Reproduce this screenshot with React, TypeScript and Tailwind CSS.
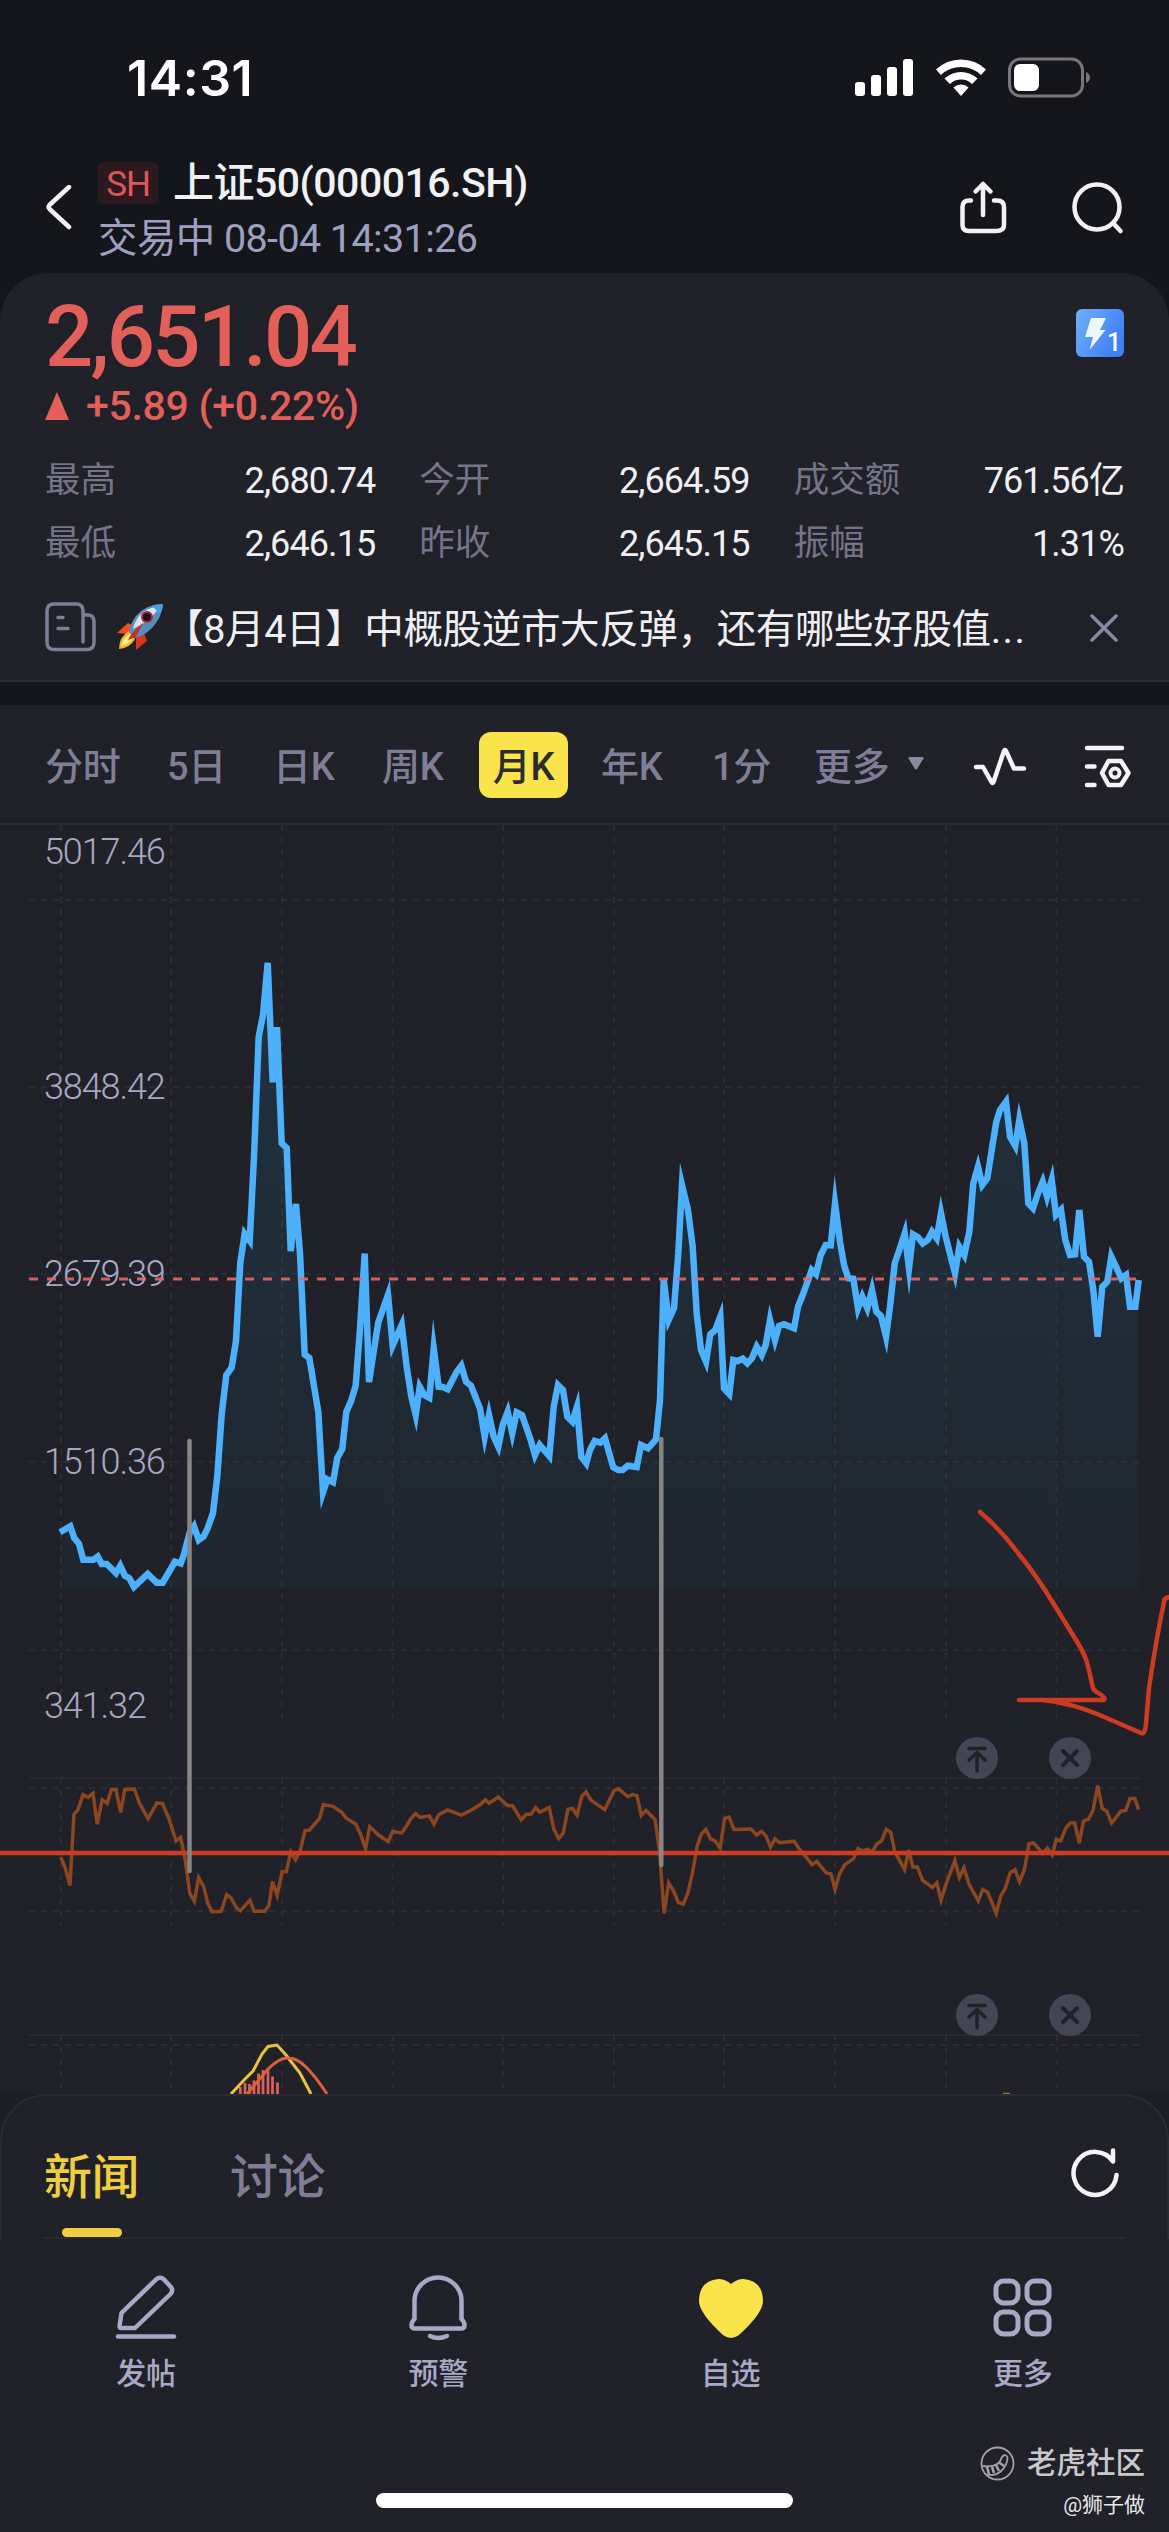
import React from 'react';

type Segment = { x: number; y: number; sx: number; sy: number; pts: string };

// each segment is stored in its own scale, origin at (x, y)
const priceSegments: Segment[] = [
  {
    x: 40, y: 900, sx: 3, sy: 2.178,
    pts: '60,1377 91,1364 103,1390 117,1402 130,1437 160,1437 173,1430 185,1446 200,1446 228,1466 241,1450 255,1472 268,1477 282,1496 323,1468 350,1487 368,1487 405,1441 422,1445 432,1425 449,1378 462,1364 476,1394 491,1386 503,1368 519,1335 532,1255 545,1120 559,1035 575,1018 588,960 601,790 614,727 629,742 642,560 656,298 669,250 683,137 698,397 711,277 725,530 740,540 752,765 768,662 780,770 794,990 808,997 835,1115 849,1290 862,1262 879,1268 892,1215 907,1195 919,1115 934,1090 947,1057 960,935 974,770 987,1050 1003,975 1015,920 1044,860 1058,970',
  },
  {
    x: 400, y: 1100, sx: 3, sy: 3,
    pts: '5,675 20,800 34,890 47,945 59,860 73,885 88,893 101,745 116,860 129,861 143,868 170,815 184,797 198,845 213,857 240,925 254,1010 267,945 281,1010 295,1040 308,975 323,935 337,1000 350,937 366,945 392,1020 405,1065 419,1035 448,1068 461,920 474,855 489,870 502,950 517,965 531,920 544,1070 559,1090 570,1050 584,1023 601,1028 615,1015 640,1102 655,1110 668,1110 683,1097 710,1101 723,1035 744,1045 768,1018 780,900 791,540 806,660 822,625 835,460 846,255 864,330 878,440 890,640 903,750 918,785 931,703 946,690 961,650 972,865 988,882 1000,780 1013,783 1028,776 1042,790 1056,775 1070,740 1085,765 1097,735 1110,660 1125,720 1137,678 1152,673',
  },
  {
    x: 780, y: 1060, sx: 3, sy: 3,
    pts: '42,805 54,740 68,705 95,630 108,642 122,585 137,555 152,556 165,430 180,545 192,615 205,655 220,656 234,745 247,710 262,745 276,690 289,755 303,768 318,830 330,740 344,610 358,570 374,520 387,625 399,523 414,532 428,550 443,540 456,515 470,535 483,460 497,530 511,585 525,640 538,560 553,585 568,515 580,370 594,320 607,375 622,355 635,270 649,185 660,150 678,125 690,230 706,258 718,180 733,250 745,430 759,445 774,400 788,365 801,410 815,360 828,465 843,450 856,540 870,585 885,583 898,450 912,590 927,605 940,690 953,830 967,680 982,665 994,590 1008,620 1024,655 1038,645 1050,740 1066,740 1076,660',
  },
];

const indicatorSegments: Segment[] = [
  {
    x: 0, y: 1500, sx: 2.613, sy: 2.529,
    pts: '159,903 172,935 183,975 193,795 204,783 217,745 230,752 243,742 254,820 267,758 280,767 291,732 303,732 315,790 326,732 351,731 365,768 387,806 410,766 425,768 443,810 460,862 472,853 484,910 496,995 508,1015 519,955 532,977 543,1020 554,1041 578,1040 592,998 604,1007 617,1030 628,1039 653,1012 664,1040 692,1040 703,1025 712,965 724,1000 737,940 748,940 760,890 772,910 785,885 797,836 808,835 835,805 845,770 870,775 893,790 905,805 930,820 942,845 955,882 966,826 990,848 1014,864 1026,838 1050,842 1062,825 1074,805 1086,793 1098,803 1122,799 1134,820 1146,796 1170,784 1206,797 1230,785 1255,770 1268,758 1278,767 1302,751 1325,772 1340,774 1362,809 1375,795 1388,794 1400,778 1410,790 1435,778 1447,832 1460,856 1472,842 1484,782 1496,780 1508,797 1520,750',
  },
  {
    x: 580, y: 1500, sx: 2.662, sy: 2.529,
    pts: '16,738 30,760 66,783 90,736 102,730 127,750 140,745 152,748 163,798 176,785 200,808 212,890 224,1045 236,968 250,990 262,1018 275,1022 287,995 300,940 312,875 323,845 335,833 348,857 360,863 373,880 385,805 397,802 410,833 455,832 470,847 483,838 495,850 507,878 519,857 532,867 570,863 582,880 618,922 630,914 655,943 668,945 679,985 691,945 705,922 728,907 740,881 752,888 765,883 778,890 790,870 803,862 815,833 827,840 838,890 864,935 875,885 886,928 898,928 912,962 938,980 950,968 961,1012 973,975 998,912 1010,955 1022,930 1035,970 1060,1014 1072,985 1085,992 1108,1045 1120,1002 1133,980 1145,943 1158,935 1170,965 1183,935 1195,870 1207,867 1232,893 1244,880 1257,898 1268,858 1280,862 1293,830 1305,817 1317,817 1329,868 1340,812 1354,807 1366,785 1378,722 1390,780 1402,787 1415,817 1440,787 1453,785 1464,755 1477,755 1487,783',
  },
];

const toPoints = (segments: Segment[]) =>
  segments
    .map(s =>
      s.pts
        .split(' ')
        .map(p => {
          const [px, py] = p.split(',').map(Number);
          return `${(s.x + px / s.sx).toFixed(1)},${(s.y + py / s.sy).toFixed(1)}`;
        })
        .join(' ')
    )
    .join(' ');

const pricePoints = toPoints(priceSegments);
const indicatorPoints = toPoints(indicatorSegments);

const gridX = [61, 171, 282, 392.5, 503, 614, 724, 835, 946, 1056.5];
const gridY = [900, 1087, 1274, 1462, 1650, 1788, 1911, 2045];

const stats = [
  { label: '最高', value: '2,680.74' },
  { label: '今开', value: '2,664.59' },
  { label: '成交额', value: '761.56亿' },
  { label: '最低', value: '2,646.15' },
  { label: '昨收', value: '2,645.15' },
  { label: '振幅', value: '1.31%' },
];

const macdBars = [
  [240.3, 2087], [245, 2083], [249.5, 2084], [254, 2080.5], [258.5, 2073.5],
  [263, 2070], [268, 2069.5], [272.5, 2076.5], [277.5, 2082.5],
];

const StatusBar = () => (
  <div className="h-[156px] flex justify-between items-center pl-[127px] pr-[78px]">
    <span className="font-['Inter',sans-serif] font-semibold text-[50px] leading-none tracking-[0.6px] text-white">14:31</span>
    <svg width="236" height="46" viewBox="0 0 236 46" fill="none">
      <g fill="#fff">
        <rect x="0" y="27" width="10" height="14" rx="3" />
        <rect x="16" y="20" width="10" height="21" rx="3" />
        <rect x="32" y="12" width="10" height="29" rx="3" />
        <rect x="48" y="4" width="10" height="37" rx="3" />
        <path d="M81 14.5 A36 36 0 0 1 131 14.5 L126 20 A29 29 0 0 0 86 20 Z" />
        <path d="M89.5 23.5 A24 24 0 0 1 122.500 23.5 L117 29 A16 16 0 0 0 95 29 Z" />
        <path d="M98.500 32.500 A11 11 0 0 1 113.500 32.500 L106 41 Z" />
        <rect x="159" y="9" width="25" height="27" rx="6" />
      </g>
      <rect x="154.500" y="4" width="73" height="37" rx="11" stroke="#77777c" strokeWidth="3" />
      <path d="M231 17 Q235 19 235 22.500 Q235 26 231 28 Z" fill="#77777c" />
    </svg>
  </div>
);

const Header = () => (
  <div className="h-[117px] flex pl-[45px] pr-[44px]">
    <svg className="mt-[29px]" width="27" height="50" viewBox="0 0 27 50" fill="none" stroke="#f2f2f4" strokeWidth="4.500" strokeLinecap="round" strokeLinejoin="round">
      <path d="M24 2 L4.500 20 Q2.500 22 4.500 24 L24 42" />
    </svg>
    <div className="ml-[26px] flex-1">
      <div className="flex items-center h-[54px]">
        <span className="w-[60px] h-[42px] rounded-[6px] bg-[#2c1a20] text-[#e25557] text-[35px] leading-[45px] text-center tracking-[-1px]">SH</span>
        <span className="ml-[15px] text-[41px] leading-[54px] font-medium tracking-[-0.5px] text-[#f2f2f4] whitespace-nowrap">上证50(000016.SH)</span>
      </div>
      <div className="mt-[5px] text-[39.5px] leading-[48px] tracking-[-0.6px] text-[#9f9fc0]">交易中 08-04 14:31:26</div>
    </div>
    <svg className="mt-[24px] -mr-px" width="50" height="58" viewBox="0 0 50 58" fill="none" stroke="#f2f2f4" strokeWidth="4.500" strokeLinecap="round" strokeLinejoin="round">
      <path d="M13 20.500 H11 Q4.500 20.500 4.500 27 V45 Q4.500 51 11 51 H38 Q46 51 46 45 V27 Q46 20.500 39 20.500 H36" />
      <path d="M25 35 V4 M17.500 11.500 L25 4 L32.500 11.500" />
    </svg>
    <svg className="ml-[64px] mt-[24px]" width="54" height="58" viewBox="0 0 54 58" fill="none" stroke="#f2f2f4" strokeWidth="4.500" strokeLinecap="round">
      <circle cx="26" cy="27" r="22.500" />
      <path d="M42.500 43.500 L49.500 51" />
    </svg>
  </div>
);

const Rocket = () => (
  <svg width="48" height="48" viewBox="0 0 48 48" className="shrink-0">
    <path d="M12 20 L1 30 L14 31 L19 24 Z" fill="#ee4f24" />
    <path d="M20 35 L20 47 L31 38 L28 30 Z" fill="#d8371f" />
    <path d="M13 28 Q3 34 3 46 Q14 45 19 36 Z" fill="#f8b62c" />
    <path d="M14 31 Q7 35 5 43 Q13 41 17 35 Z" fill="#fff08a" />
    <path d="M47 1 Q30 1 20 13 Q14 21 13 29 L19 35 Q28 33 36 25 Q46 14 47 1 Z" fill="#5590b8" />
    <path d="M45 3 Q31 4 23 13 Q18 20 17 26 Q32 20 45 3 Z" fill="#d9e3ea" />
    <path d="M47 1 Q41 1 36 3 L44 11 Q47 6 47 1 Z" fill="#4a9fe0" />
    <circle cx="31" cy="14" r="6" fill="#b3263a" />
    <circle cx="31" cy="14" r="4" fill="#15151c" />
    <path d="M27 20 Q16 28 12 37 L20 34 Z" fill="#c52f2b" />
  </svg>
);

const Quote = () => (
  <div className="h-[409px] rounded-t-[48px] bg-[#212129] border-b-2 border-[#2d2d34] px-[45px] flex flex-col">
    <div className="flex justify-between">
      <div className="mt-[22px] h-[84px] text-[85px] leading-[84px] font-medium tracking-[-2.8px] text-[#e26059]">2,651.04</div>
      <svg className="mt-[36px]" width="48" height="48" viewBox="0 0 48 48">
        <defs>
          <linearGradient id="boltBg" x1="0" y1="0" x2="1" y2="0.500">
            <stop offset="0" stopColor="#6fb0fa" />
            <stop offset="1" stopColor="#3f80f6" />
          </linearGradient>
        </defs>
        <rect width="48" height="48" rx="6" fill="url(#boltBg)" />
        <path d="M15 9 H30 L24 21 H29.500 L13.500 41 L17 28 H9 Z" fill="#eef7ff" />
        <text x="31" y="42" fontSize="25" fontWeight="500" fill="#fff">1</text>
      </svg>
    </div>
    <div className="h-[54px] flex items-center text-[41px] leading-none font-medium tracking-[-0.3px] text-[#e26059]">
      <svg className="mr-[17px]" width="24" height="28" viewBox="0 0 24 28">
        <path d="M12 0 L24 28 H0 Z" fill="#e26059" />
      </svg>
      +5.89 (+0.22%)
    </div>
    <div className="mt-[16px] grid grid-cols-3 gap-x-[44px]">
      {stats.map(s => (
        <div key={s.label} className="h-[63px] flex justify-between items-center text-[36px] leading-none">
          <span className="text-[#757488] text-[35.5px]">{s.label}</span>
          <span className="text-[#f0f0f3] tracking-[-0.9px]">{s.value}</span>
        </div>
      ))}
    </div>
    <div className="mt-[20px] h-[64px] flex items-center">
      <svg width="51" height="50" viewBox="0 0 51 50" fill="none" stroke="#7f7e96" strokeWidth="3.500" strokeLinecap="round">
        <path d="M38 40 V9 Q38 2 31 2 H9 Q2 2 2 9 V40 Q2 47.500 9 47.500 H42 Q49 47.500 49 40 V20 Q49 13 43 13 H38" />
        <path d="M13 15.500 H18 M13 26.500 H23" />
      </svg>
      <div className="ml-[20px] flex items-center">
        <Rocket />
        <span className="mt-[5px] text-[39.5px] leading-none tracking-[-0.35px] text-[#f0f0f3] whitespace-nowrap">
          【8月4日】中概股逆市大反弹，还有哪些好股值<span className="tracking-[1.5px]">...</span>
        </span>
      </div>
      <svg className="ml-auto mr-[6px] mt-[2px]" width="28" height="28" viewBox="0 0 28 28" stroke="#8a89a2" strokeWidth="3.500" strokeLinecap="round">
        <path d="M2 2 L26 26 M26 2 L2 26" />
      </svg>
    </div>
  </div>
);

const Periods = () => (
  <div className="mt-[23px] h-[120px] bg-[#212129] border-b-2 border-[#2a2b32] pl-[45px] pt-[2px] flex items-center text-[38px] leading-none text-[#7f7e96] font-medium tracking-[-0.3px] whitespace-nowrap">
    <span className="w-[122px] pt-[3px]">分时</span>
    <span className="w-[106px] pt-[3px]">5日</span>
    <span className="w-[109px] pt-[3px]">日K</span>
    <span className="w-[97px] pt-[3px]">周K</span>
    <span className="w-[89px] h-[66px] pt-[3px] rounded-[12px] bg-[#fae44b] text-[#2c2b30] flex items-center justify-center">月K</span>
    <span className="ml-[33px] w-[111px] pt-[3px]">年K</span>
    <span className="w-[102px] pt-[3px]">1分</span>
    <span className="pt-[3px]">更多</span>
    <svg className="ml-[19px] -mt-[4px]" width="16" height="13" viewBox="0 0 16 13" fill="#8a89a2">
      <path d="M1.500 0 H14.500 Q16 0 15.500 1.500 L9 12 Q8 13 7 12 L0.500 1.500 Q0 0 1.500 0 Z" />
    </svg>
    <svg className="ml-[49px] mt-[4px]" width="54" height="40" viewBox="0 0 54 40" fill="none" stroke="#f4f4f6" strokeWidth="4.500" strokeLinecap="round" strokeLinejoin="round">
      <path d="M3 20 H10 L18.500 35 Q19.500 37 20.500 35 L31 4 Q32 2 33 4 L41 21.500 H51" />
    </svg>
    <svg className="ml-[57px] mt-[4px]" width="48" height="44" viewBox="0 0 48 44" fill="none" stroke="#f4f4f6" strokeWidth="4.500" strokeLinecap="round" strokeLinejoin="round">
      <path d="M3 3 H38 M3 21.500 H10.500 M3 40 H10.500" />
      <path d="M24.500 16 H37 L44.500 28 L37 40 H24.500 L18 28 Z" />
      <circle cx="31" cy="28" r="4.500" strokeWidth="4" />
    </svg>
  </div>
);

const PaneButtons = ({ y }: { y: number }) => (
  <g>
    <circle cx="977" cy={y} r="21" fill="#464556" />
    <circle cx="1070" cy={y} r="21" fill="#464556" />
    <g transform={`translate(977 ${y})`} stroke="#212129" strokeWidth="3.500" strokeLinecap="round" strokeLinejoin="round" fill="none">
      <path d="M-8 -9.500 H8 M0 13 V-4 M-8 2 L0 -5.500 L8 2" />
    </g>
    <g transform={`translate(1070 ${y})`} stroke="#212129" strokeWidth="4" strokeLinecap="round">
      <path d="M-7 -7 L7 7 M7 -7 L-7 7" />
    </g>
  </g>
);

const Chart = () => (
  <svg className="block bg-[#212129]" width="1169" height="1269" viewBox="0 825 1169 1269" fill="none">
    <defs>
      <linearGradient id="area" gradientUnits="userSpaceOnUse" x1="0" y1="960" x2="0" y2="1589">
        <stop offset="0" stopColor="#20323f" />
        <stop offset="1" stopColor="#20262f" />
      </linearGradient>
    </defs>

    <polygon points={`60,1589 ${pricePoints} 1139,1589`} fill="url(#area)" />

    {/* grid */}
    <g stroke="#4a4c57" strokeOpacity="0.28" strokeWidth="2">
      {gridX.map(x => (
        <path key={x} d={`M${x} 825 V1719 M${x} 1778 V1925 M${x} 2035 V2088`} strokeDasharray="6 6" />
      ))}
      {gridY.map(y => (
        <path key={y} d={`M29 ${y} H1140`} strokeDasharray="6 6" />
      ))}
      <path d="M29 1778 H1140 M29 2035 H1140" strokeWidth="1.500" />
    </g>

    <polyline points={pricePoints} stroke="#4db0fb" strokeWidth="6.500" strokeMiterlimit="10" />

    <g fontSize="36" fontWeight="300" fill="#a9a8c2" letterSpacing="-1.1">
      <text x="44" y="864">5017.46</text>
      <text x="44" y="1098.500">3848.42</text>
      <text x="44" y="1285.500">2679.39</text>
      <text x="44" y="1473.500">1510.36</text>
      <text x="44" y="1717.500">341.32</text>
    </g>
    <path d="M29 1279 H1138" stroke="#e0696b" strokeWidth="3" strokeDasharray="9 9" opacity="0.900" />

    {/* indicator pane */}
    <polyline points={indicatorPoints} stroke="#8c4721" strokeWidth="3.500" />
    <path d="M0 1853 H1169" stroke="#c93c22" strokeWidth="4.500" />
    <path d="M189.500 1441 V1871 M661.300 1439 V1865" stroke="#868686" strokeWidth="4.500" strokeLinecap="round" />

    {/* macd */}
    {macdBars.map(([x, top]) => (
      <path key={x} d={`M${x} ${top} V2094`} stroke="#d8625a" strokeWidth="2.800" />
    ))}
    <path d="M231 2094 L245 2079 L253 2071 L262 2054 L268 2046.500 L277 2045 L286 2055 L300 2073 L311 2094" stroke="#e8c43c" strokeWidth="3" />
    <path d="M247 2094 L258 2081 L268 2069 Q280 2057 288 2058 Q297 2058 306 2067 Q316 2077 327 2094" stroke="#dd6138" strokeWidth="3" />
    <path d="M1003 2093.500 H1010" stroke="#8f7b35" strokeWidth="1.500" />

    {/* hand-drawn marks */}
    <path
      d="M980 1512 Q1000 1529 1018 1553 Q1037 1576 1055 1606 L1076 1640 Q1086 1656 1088 1666 L1093 1688 Q1094 1691 1100 1694 Q1106 1698 1104 1700 H1019 H1043 Q1072 1703 1102 1716 L1141 1733 Q1145 1735 1146 1724 L1149 1688 Q1156 1640 1164 1602 Q1164 1597 1171 1597"
      stroke="#cd3b22" strokeWidth="4.500" strokeLinecap="round" strokeLinejoin="round"
    />
    <PaneButtons y={1758} />
    <PaneButtons y={2015} />
  </svg>
);

const NewsTabs = () => (
  <div className="bg-[#1e1f26]">
    <div className="h-[145px] rounded-t-[46px] bg-[#212129] border-2 border-b-0 border-[#2b2c33] px-[42px]">
      <div className="h-[143px] border-b-2 border-[#2a2b32] flex">
        <div className="flex flex-col">
          <span className="h-[134px] pt-[50px] text-[48px] leading-[64px] font-medium tracking-[-0.5px] text-[#efce40]">新闻</span>
          <span className="ml-[18px] w-[60px] h-[9px] rounded-full bg-[#efce40]" />
        </div>
        <span className="ml-[91px] pt-[50px] text-[48px] leading-[64px] font-medium tracking-[-0.5px] text-[#7f7e96]">讨论</span>
        <svg className="ml-auto mr-[5px] mt-[51px]" width="50" height="52" viewBox="0 0 50 52" fill="none" stroke="#f4f4f6" strokeWidth="4.500" strokeLinecap="round" strokeLinejoin="round">
          <path d="M46.500 28 A21.500 21.500 0 1 1 43 14.500 V3.500" />
        </svg>
      </div>
    </div>
  </div>
);

const navItems = [
  {
    label: '发帖',
    icon: (
      <svg width="68" height="68" viewBox="0 0 68 68" fill="none" stroke="#a9a8c6" strokeWidth="4.500" strokeLinecap="round" strokeLinejoin="round">
        <path d="M9.500 38 L44 4.500 Q48 1 52 4.500 L58 11 Q62 15 58.500 19 L23 53 H9.500 Q7.500 53 7.500 51 Z" />
        <path d="M6 61.500 H62" />
      </svg>
    ),
  },
  {
    label: '预警',
    icon: (
      <svg width="68" height="68" viewBox="0 0 68 68" fill="none" stroke="#a9a8c6" strokeWidth="4.500" strokeLinecap="round">
        <path d="M10.500 44 V26 A23.500 23.500 0 0 1 57.500 26 V44 Q60.500 47 60.500 50 Q60.500 53.500 57 53.500 H11 Q7.500 53.500 7.500 50 Q7.500 47 10.500 44 Z" />
        <path d="M26 61 Q34 65 43 61" />
      </svg>
    ),
  },
  {
    label: '自选',
    icon: (
      <svg width="68" height="68" viewBox="0 0 68 68" fill="#fae44b">
        <path d="M34 9 Q40 4 46.500 4 Q66 6 66 26 Q66 38 42 60 Q34 66 26 60 Q2 38 2 26 Q2 6 21.500 4 Q28 4 34 9 Z" />
      </svg>
    ),
  },
  {
    label: '更多',
    icon: (
      <svg width="68" height="68" viewBox="0 0 68 68" fill="none" stroke="#a9a8c6" strokeWidth="5">
        <rect x="7" y="6" width="22" height="22" rx="7.500" />
        <rect x="38" y="6" width="22" height="22" rx="7.500" />
        <rect x="7" y="37" width="22" height="22" rx="7.500" />
        <rect x="38" y="37" width="22" height="22" rx="7.500" />
      </svg>
    ),
  },
];

const BottomNav = () => (
  <div className="relative h-[293px] bg-[#212129]">
    <div className="grid grid-cols-4 pt-[36px]">
      {navItems.map(item => (
        <div key={item.label} className="flex flex-col items-center">
          {item.icon}
          <span className="mt-[8px] text-[30px] leading-[46px] font-medium text-[#a9a8c6]">{item.label}</span>
        </div>
      ))}
    </div>
    <div className="absolute left-[376px] bottom-[24px] w-[417px] h-[15px] rounded-full bg-white" />
    {/* watermark */}
    <div className="absolute right-[24px] bottom-[11px] flex flex-col items-end">
      <div className="flex items-center text-[#c9c9cc] text-[29.5px] leading-[40px] font-medium">
        <svg className="mr-[12px]" width="35" height="35" viewBox="0 0 35 35" fill="none" stroke="#a2a2a7" strokeWidth="1.800">
          <circle cx="17.500" cy="17.500" r="16" />
          <path d="M2.500 20 Q19 22 21.500 12 Q24 7 27.500 11 Q28 19 20 26 Q14 31 7 28" />
          <path d="M7 21 L9 28 M12 21 L14 27 M16 19 L19 25 M19 16.500 L24 20" strokeWidth="2.600" />
        </svg>
        老虎社区
      </div>
      <div className="mt-[6px] text-[21px] leading-[32px] text-[#e8e8ea]">@狮子做</div>
    </div>
  </div>
);

export default function App() {
  return (
    <div className="w-[1169px] h-[2532px] overflow-hidden bg-[#15161b] font-['Roboto','Noto_Sans_CJK_SC',sans-serif]">
      <StatusBar />
      <Header />
      <Quote />
      <Periods />
      <Chart />
      <NewsTabs />
      <BottomNav />
    </div>
  );
}
